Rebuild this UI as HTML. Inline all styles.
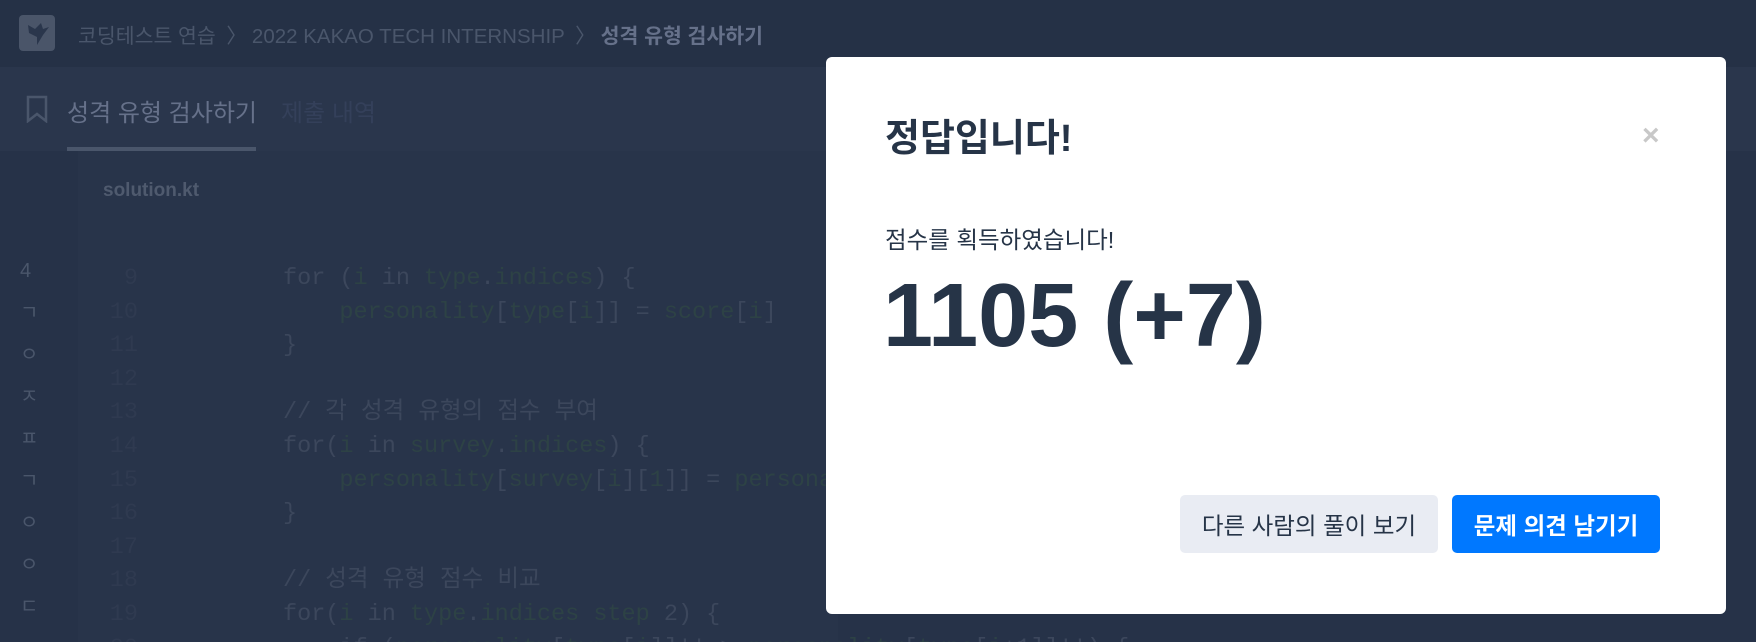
<!DOCTYPE html>
<html><head><meta charset="utf-8"><style>
*{margin:0;padding:0;box-sizing:border-box}
html,body{width:1756px;height:642px;overflow:hidden}
body{background:#263248;font-family:"Liberation Sans","Noto Sans CJK KR",sans-serif;position:relative}
.top{position:absolute;left:0;top:0;width:1756px;height:67px;background:#253146}
.logo{position:absolute;left:19px;top:15px;width:36px;height:36px;background:#4a5569;border-radius:4px}
.bc{position:absolute;left:78px;top:19px;font-size:20.5px;color:#4a566b;white-space:nowrap}
.bc b{color:#66718a}
.tabs{position:absolute;left:0;top:67px;width:1756px;height:84px;background:#2a364c}
.mono{font-family:"Liberation Mono","Noto Sans CJK KR",monospace}
.code{position:absolute;left:283px;top:262px;font-size:23.5px;line-height:33.6px;color:#3c475c;white-space:pre}
.ln{position:absolute;left:100px;width:38px;top:262px;font-size:23.5px;line-height:33.6px;color:#2f3a50;white-space:pre;text-align:right}
.g{color:#2d4245}
.modal{position:absolute;left:826px;top:57px;width:900px;height:557px;background:#fff;border-radius:6px}
.btn{position:absolute;top:438px;height:58px;border-radius:5px;display:flex;align-items:center;justify-content:center}
</style></head><body>
<div class="top">
<div class="logo"><svg width="36" height="36"><path d="M9 10 L16 14 L22 8 L24 14 L30 12 L24 20 L18 30 L18 22 L10 18 Z" fill="#2a364c"/></svg></div>
<div class="bc">코딩테스트 연습 <span style="margin:0 5px">〉</span>2022 KAKAO TECH INTERNSHIP <span style="margin:0 5px">〉</span><b>성격 유형 검사하기</b></div>
</div>
<div class="tabs">
<svg style="position:absolute;left:25px;top:28px" width="24" height="28"><path d="M3 2 H21 V26 L12 19 L3 26 Z" fill="none" stroke="#4a566b" stroke-width="2.5"/></svg>
<div style="position:absolute;left:67px;top:26px;font-size:24px;color:#66718a">성격 유형 검사하기</div>
<div style="position:absolute;left:281px;top:26px;font-size:24px;color:#34405a">제출 내역</div>
<div style="position:absolute;left:67px;top:80px;width:189px;height:4px;background:#4a566b"></div>
</div>
<div style="position:absolute;left:78px;top:151px;width:760px;height:491px;background:#28344a"></div>
<div style="position:absolute;left:103px;top:180px;font-size:19px;font-weight:bold;color:#4f5a6e">solution.kt</div>
<div style="position:absolute;left:20px;top:250px;font-size:20px;line-height:42px;color:#4a566b">4<br>ㄱ<br>ㅇ<br>ㅈ<br>ㅍ<br>ㄱ<br>ㅇ<br>ㅇ<br>ㄷ</div>
<div class="ln mono">9
10
11
12
13
14
15
16
17
18
19
20</div>
<div class="code mono">for (<span class="g">i</span> in <span class="g">type</span>.<span class="g">indices</span>) {
    <span class="g">personality</span>[<span class="g">type</span>[<span class="g">i</span>]] = <span class="g">score</span>[<span class="g">i</span>]
}

// 각 성격 유형의 점수 부여
for(<span class="g">i</span> in <span class="g">survey</span>.<span class="g">indices</span>) {
    <span class="g">personality</span>[<span class="g">survey</span>[<span class="g">i</span>][<span class="g">1</span>]] = <span class="g">personality</span>
}

// 성격 유형 점수 비교
for(<span class="g">i</span> in <span class="g">type</span>.<span class="g">indices</span> <span class="g">step</span> 2) {
    if (<span class="g">personality</span>[<span class="g">type</span>[<span class="g">i</span>]]!! &gt; <span class="g">personality</span>[<span class="g">type</span>[<span class="g">i</span>+1]]!!) {</div>
<div class="modal">
<div style="position:absolute;left:59px;top:50px;font-size:38px;font-weight:bold;color:#263447">정답입니다!</div>
<div style="position:absolute;left:816px;top:62px;font-size:30px;font-weight:bold;color:#c8c8c8">×</div>
<div style="position:absolute;left:59px;top:164px;font-size:23.5px;color:#263447">점수를 획득하였습니다!</div>
<div style="position:absolute;left:57px;top:208px;font-size:90px;font-weight:bold;color:#263447">1105 (+7)</div>
<div class="btn" style="left:354px;width:258px;background:#e9ecf3;color:#263447;font-size:23.5px">다른 사람의 풀이 보기</div>
<div class="btn" style="left:626px;width:208px;background:#0078ff;color:#fff;font-weight:bold;font-size:23.5px">문제 의견 남기기</div>
</div>
</body></html>
